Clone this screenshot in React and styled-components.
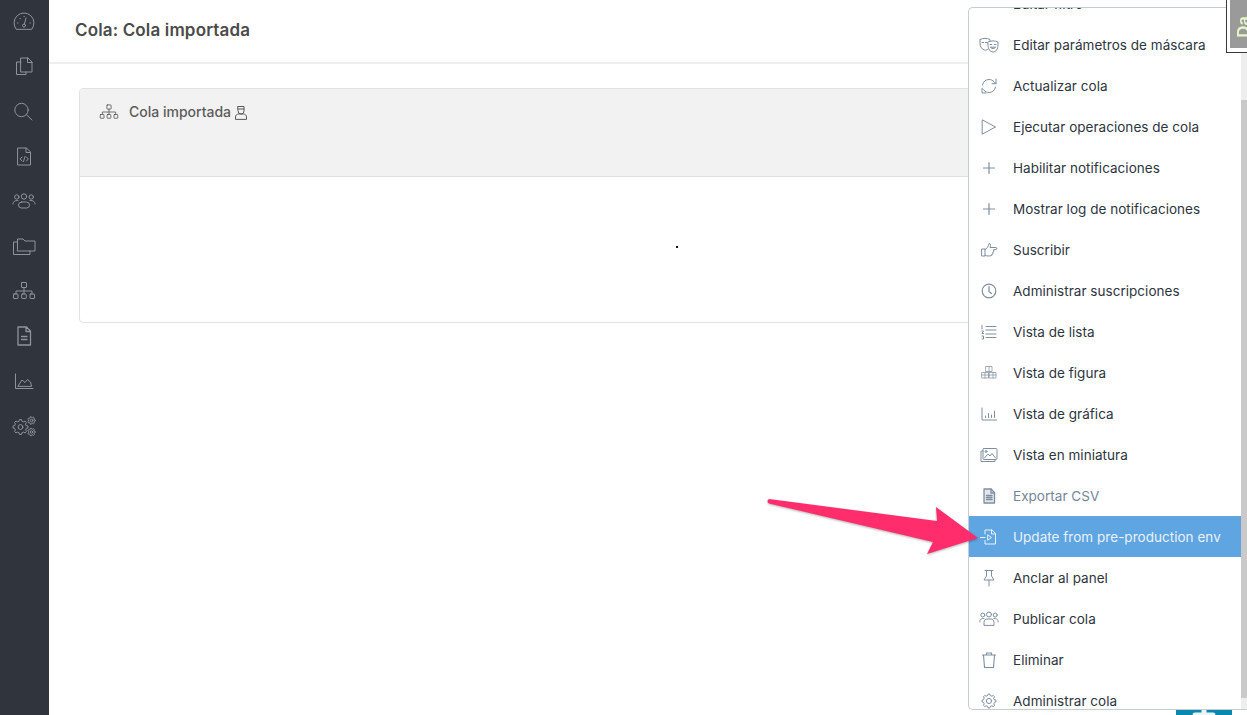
import React from "react";
import styled, { createGlobalStyle } from "styled-components";

const Global = createGlobalStyle`
  html, body { margin: 0; padding: 0; height: 715px; overflow: hidden; background: #fff; }
  body { font-family: Inter, "Liberation Sans", sans-serif; }
  #root { height: 715px; }
  * { box-sizing: border-box; }
`;

const Page = styled.div`
  position: relative;
  display: flex;
  width: 1247px;
  height: 715px;
  overflow: hidden;
`;
const Sidebar = styled.nav`
  flex: 0 0 49px;
  background: #2f343d;
  color: #8f949c;
`;
const SideItem = styled.div`
  height: 45px;
  padding: 0 1px 3px 0;
  display: flex;
  align-items: center;
  justify-content: center;
`;
const Main = styled.main`
  flex: 1;
  min-width: 0;
`;
const Header = styled.header`
  height: 64px;
  padding: 0 0 2px 26px;
  display: flex;
  align-items: center;
  border-bottom: 2px solid #eeeeee;
`;
const Title = styled.h1`
  margin: 0;
  font-size: 17px;
  letter-spacing: 0.15px;
  line-height: 20px;
  font-weight: 600;
  color: #4b4b4b;
`;
const Content = styled.div`
  padding: 24px 30px;
`;
const Panel = styled.section`
  height: 235px;
  border: 1px solid #e2e2e2;
  border-radius: 4px;
  overflow: hidden;
`;
const PanelHead = styled.div`
  height: 88px;
  background: #f2f2f2;
  border-bottom: 1px solid #e2e2e2;
  padding: 13px 0 0 19px;
  display: flex;
  align-items: flex-start;
  color: #5a5a5a;
`;
const PanelTitle = styled.span`
  margin-left: 10px;
  font-size: 14px;
  line-height: 20px;
  font-weight: 500;
  color: #5c5c5c;
`;
const PanelBadge = styled.span`
  margin: 2px 0 0 2px;
`;
const PanelBody = styled.div`
  padding: 69px 0 0 596px;
`;
const Dot = styled.div`
  width: 2px;
  height: 2px;
  background: #111;
`;
const Menu = styled.div`
  position: absolute;
  z-index: 3;
  top: 7px;
  left: 968px;
  right: 0;
  height: 703px;
  display: flex;
  background: #fff;
  border: 1px solid #c4ccd4;
  border-right: 0;
  border-radius: 5px 0 0 5px;
  overflow: hidden;
`;
const MenuList = styled.ul`
  flex: 1;
  list-style: none;
  margin: -25px 0 0;
  padding: 0;
`;
const MenuRow = styled.li`
  height: 41px;
  display: flex;
  align-items: center;
  padding-left: 10px;
  gap: 14px;
  font-size: 13.5px;
  letter-spacing: 0.03px;
  white-space: nowrap;
  background: ${(p) => (p.$active ? "#5fa5e2" : "transparent")};
  color: ${(p) => (p.$active ? "#e8f2fb" : p.$muted ? "#75869a" : "#2e3540")};
`;
const RowIcon = styled.span`
  flex: 0 0 20px;
  display: flex;
  justify-content: center;
  color: ${(p) => (p.$active ? "#e8f2fb" : "#7f8e9f")};
`;
const Track = styled.div`
  flex: 0 0 6px;
  background: #eeeeee;
`;
const Thumb = styled.div`
  margin-top: 92px;
  height: 598px;
  background: #c9c9c9;
`;
const Thumbnail = styled.div`
  position: absolute;
  z-index: 4;
  top: 0;
  right: 0;
  width: 21px;
  height: 53px;
  background: #fff;
  border-left: 1px solid #3a3a3a;
  border-bottom: 1px solid #3a3a3a;
  padding: 0 0 4px 3px;
`;
const ThumbImage = styled.div`
  height: 100%;
  background: #9a9a9a;
  overflow: hidden;
  display: flex;
  flex-direction: column;
  justify-content: flex-end;
`;
const ThumbText = styled.span`
  display: block;
  margin-left: 7px;
  writing-mode: vertical-rl;
  transform: rotate(180deg);
  font-family: "Liberation Sans", sans-serif;
  font-size: 17px;
  line-height: 14px;
  font-weight: 700;
  color: #e3f6c6;
  white-space: nowrap;
  padding-top: 10px;
`;
const Fab = styled.div`
  position: absolute;
  z-index: 1;
  top: 687px;
  left: 1176px;
  width: 56px;
  height: 56px;
  background: #0a89ae;
  display: flex;
  align-items: center;
  justify-content: center;
  color: #e9f5f9;
`;
const ArrowLayer = styled.svg`
  position: absolute;
  z-index: 5;
  left: 760px;
  top: 490px;
  filter: drop-shadow(0 1px 1px rgba(0, 0, 0, 0.3));
`;

const Svg = ({ s = 24, vb = 24, w = 1, children }) => (
  <svg width={s} height={s} viewBox={`0 0 ${vb} ${vb}`} fill="none" stroke="currentColor" strokeWidth={w} strokeLinejoin="round" strokeLinecap="round">
    {children}
  </svg>
);

const gear = (cx, cy, r, teeth) => {
  const pts = [];
  const st = (Math.PI * 2) / teeth;
  for (let i = 0; i < teeth; i++) {
    const a = i * st;
    [[-0.3, r * 0.8], [-0.17, r], [0.17, r], [0.3, r * 0.8]].forEach(([o, rad]) => {
      const t = a + o * st;
      pts.push(`${(cx + rad * Math.cos(t)).toFixed(2)} ${(cy + rad * Math.sin(t)).toFixed(2)}`);
    });
  }
  return `M${pts.join("L")}Z`;
};

const sideIcons = [
  <Svg key="g"><path d="M4 20A10 10 0 1 1 20 20Z" /><circle cx="12" cy="16.600" r="1.500" /><path d="M12.400 15L14 9M5.500 14h.5M18 14h.5M8 9.500h.3M12 7.500h.3" /></Svg>,
  <Svg key="c"><path d="M9 4h7l4 4v10H9zM15.500 4v4.500h4.500" /><path d="M9 8H4.500v12.500H14V18" /></Svg>,
  <Svg key="s"><circle cx="9.500" cy="11" r="6.700" /><path d="M14.500 15.700L20 21" /></Svg>,
  <Svg key="f"><path d="M6 4h8.500L18.500 8v13H6zM14 4v4.500h4.500" /><path d="M10 13l-1.800 2 1.800 2M14.500 13l1.800 2-1.800 2M13 12.500l-1.500 5" /></Svg>,
  <Svg key="u"><circle cx="12" cy="7.500" r="2.700" /><circle cx="4.800" cy="8" r="2.200" /><circle cx="19.200" cy="8" r="2.200" /><rect x="6.500" y="13" width="11" height="6" rx="3" /><path d="M1 15c0-2.500 1.500-3.500 5-3.500M23 15c0-2.500-1.500-3.500-5-3.500" /></Svg>,
  <Svg key="d"><path d="M5.500 15V5h5.500l2 2h10v10H5.500z" /><path d="M5.500 8H1.500v12.500H18V17" /></Svg>,
  <Svg key="t"><rect x="9.500" y="3.500" width="5" height="5" rx=".5" /><path d="M12 8.500V15M4 15v-3h16v3" /><rect x="1.500" y="15" width="4.500" height="4.500" rx=".5" /><rect x="9.700" y="15" width="4.500" height="4.500" rx=".5" /><rect x="18" y="15" width="4.500" height="4.500" rx=".5" /></Svg>,
  <Svg key="a" w={1.300}><path d="M6 3h8.500L18.500 7v14H6zM14 3v4.500h4.500" /><path d="M9.500 12.500h5.500M9.500 15.500h5.500" /></Svg>,
  <Svg key="h"><path d="M3.500 5v14.500H21" /><path d="M6 17l4-6 3 2.500 2.500-3 3 2.500 1 4z" /></Svg>,
  <Svg key="o"><path d={gear(8.500, 13, 7.500, 8)} /><circle cx="8.500" cy="13" r="2.400" /><path d={gear(19.500, 6.500, 3.800, 7)} /><circle cx="19.500" cy="6.500" r="1.300" /><path d={gear(19.500, 18, 3.800, 7)} /><circle cx="19.500" cy="18" r="1.300" /></Svg>,
];

const I = {
  filter: <Svg s={20} vb={20}><path d="M2-6H18L12 2V6L8 9V2Z" /></Svg>,
  masks: <Svg s={20} vb={20}><path d="M1 4.500C4 3 8 3 11 4.500V6M1 4.500V8c0 4 2 6.500 4.500 7 1 .4 2.500.1 3.500-1" /><path d="M9 7c3-1.500 7-1.500 10 0v3c0 4-2 7-5 7s-5-3-5-7z" /><path d="M3 7.500h1.700M6.500 7.500h1.500M11 9.500h1.800M15.300 9.500H17M11.500 12.500c1 1.500 4 1.500 5 0z" /></Svg>,
  sync: <Svg s={20} vb={20}><path d="M3.500 9C4 5.500 7 3.500 10 3.500c2 0 3.700.8 5 2.200l2 2V3" /><path d="M16.500 11c-.5 3.500-3.500 5.500-6.500 5.500-2 0-3.700-.8-5-2.200l-2-2V17h4" /><path d="M17 7.700h-4" /></Svg>,
  play: <Svg s={20} vb={20}><path d="M3.500 3L16.500 10 3.500 17Z" /></Svg>,
  plus: <Svg s={20} vb={20} w={1.200}><path d="M10 4.500V15.500M4.500 10H15.500" /></Svg>,
  thumb: <Svg s={20} vb={20}><path d="M3 9h3v7H3zM6 9.500c2-1 3.500-3 4-6 1.500 0 2 1.500 1 4h6c1 0 1 2 0 2.200h-2.500l.3 2-1 .3.2 1.800-1 .2-.3 1.500c-2 .8-5 .5-6.700 0" /></Svg>,
  clock: <Svg s={20} vb={20} w={1.200}><circle cx="10" cy="10" r="6.800" /><path d="M10 5.500V10.500L12.500 12.500" /></Svg>,
  list: <Svg s={20} vb={20}><path d="M7 4.500H17M7 8H17M7 12H17M7 15.500H17M3 3.500V7M3 9h1.500l-1.500 2.500h1.500M3 14h1.500v3H3" /></Svg>,
  shapes: <Svg s={20} vb={20} w={.9}><path d="M7 3.500h6v5H7zM3 9.500h6.500v5.500H3zM10.500 9.500H17v5.500h-6.500zM3 12h14M6 9.500V15M14 9.500V15M10 3.500v5" opacity=".8" /></Svg>,
  bars: <Svg s={20} vb={20}><path d="M3 4V16H17.500M6.500 13.500V12M9.500 13.500V9.500M12.500 13.500V11M15.500 13.500V7" /></Svg>,
  image: <Svg s={20} vb={20}><rect x="4" y="3.500" width="14" height="11" rx="1" /><path d="M4 6H2v10.500h14v-2" /><path d="M5.500 13l3.500-4 2 2 2-2.500 3.500 4.500" /><circle cx="7" cy="6.500" r="1" /></Svg>,
  csv: <Svg s={20} vb={20} w={1.300}><path d="M5 3h7l3.500 3.500V17H5z" fill="rgba(127,142,159,.22)" /><path d="M12 3v4h3.500M7.500 9.500h5.500M7.500 11.500h5.500M7.500 13.500h5.500" /></Svg>,
  update: <Svg s={20} vb={20}><path d="M6 7V3h7l3.500 3.500V17H6v-3.500M12.500 3v4h4M1.500 10.500H6" /><path d="M9 8l3.500 2.500L9 13Z" /></Svg>,
  pin: <Svg s={20} vb={20}><path d="M6 2.500h8M7.500 2.500V8L5 12h10L12.500 8V2.500M10 12v6" /></Svg>,
  users: <Svg s={20} vb={20}><circle cx="10" cy="5.500" r="2.500" /><circle cx="3.800" cy="6" r="2" /><circle cx="16.200" cy="6" r="2" /><path d="M5 16v-2.500C5 11 6.500 10 8 10h4c1.500 0 3 1 3 3.500V16zM.8 13c0-2.500 1-3.500 4.200-3.500M19.200 13c0-2.500-1-3.500-4.200-3.500" /></Svg>,
  trash: <Svg s={20} vb={20} w={1.100}><path d="M3.500 5H16.500M4.500 5L5.500 17.500H14.500L15.500 5M7.500 5V3h5v2" /></Svg>,
  gear: <Svg s={20} vb={20}><path d={gear(10, 10, 7, 8)} /><circle cx="10" cy="10" r="2.600" /></Svg>,
};

const items = [
  ["Editar filtro", I.filter],
  ["Editar parámetros de máscara", I.masks],
  ["Actualizar cola", I.sync],
  ["Ejecutar operaciones de cola", I.play],
  ["Habilitar notificaciones", I.plus],
  ["Mostrar log de notificaciones", I.plus],
  ["Suscribir", I.thumb],
  ["Administrar suscripciones", I.clock],
  ["Vista de lista", I.list],
  ["Vista de figura", I.shapes],
  ["Vista de gráfica", I.bars],
  ["Vista en miniatura", I.image],
  ["Exportar CSV", I.csv, "muted"],
  ["Update from pre-production env", I.update, "active"],
  ["Anclar al panel", I.pin],
  ["Publicar cola", I.users],
  ["Eliminar", I.trash],
  ["Administrar cola", I.gear],
];

export default function App() {
  return (
    <Page>
      <Global />
      <Sidebar>
        {sideIcons.map((ic, i) => (
          <SideItem key={i}>{ic}</SideItem>
        ))}
      </Sidebar>
      <Main>
        <Header>
          <Title>Cola: Cola importada</Title>
        </Header>
        <Content>
          <Panel>
            <PanelHead>
              <Svg s={20} vb={24}>
                <rect x="9.500" y="3.500" width="5" height="5" rx=".5" />
                <path d="M12 8.500V15M4 15v-3h16v3" />
                <rect x="1.500" y="15" width="4.500" height="4.500" rx=".5" />
                <rect x="9.700" y="15" width="4.500" height="4.500" rx=".5" />
                <rect x="18" y="15" width="4.500" height="4.500" rx=".5" />
              </Svg>
              <PanelTitle>Cola importada</PanelTitle>
              <PanelBadge>
                <Svg s={16} vb={16}>
                  <path d="M5 2.500h6v4.500a3 3 0 0 1-6 0zM5 5h6" />
                  <path d="M2.500 15v-2c0-1.800 1.500-3 3-3h5c1.500 0 3 1.200 3 3v2z" />
                </Svg>
              </PanelBadge>
            </PanelHead>
            <PanelBody>
              <Dot />
            </PanelBody>
          </Panel>
        </Content>
      </Main>
      <Fab>
        <Svg s={24} vb={24} w={5}>
          <path d="M12 3V21M3 12H21" />
        </Svg>
      </Fab>
      <Menu>
        <MenuList>
          {items.map(([label, icon, state]) => (
            <MenuRow key={label} $active={state === "active"} $muted={state === "muted"}>
              <RowIcon $active={state === "active"}>{icon}</RowIcon>
              {label}
            </MenuRow>
          ))}
        </MenuList>
        <Track>
          <Thumb />
        </Track>
      </Menu>
      <Thumbnail>
        <ThumbImage>
          <ThumbText>Da</ThumbText>
        </ThumbImage>
      </Thumbnail>
      <ArrowLayer width="230" height="75" viewBox="760 490 230 75">
        <path d="M769 499L937 521L936 507L978 538L927 554L933 542L769 503.500Q766 501 769 499Z" fill="#ff2d6c" />
      </ArrowLayer>
    </Page>
  );
}
